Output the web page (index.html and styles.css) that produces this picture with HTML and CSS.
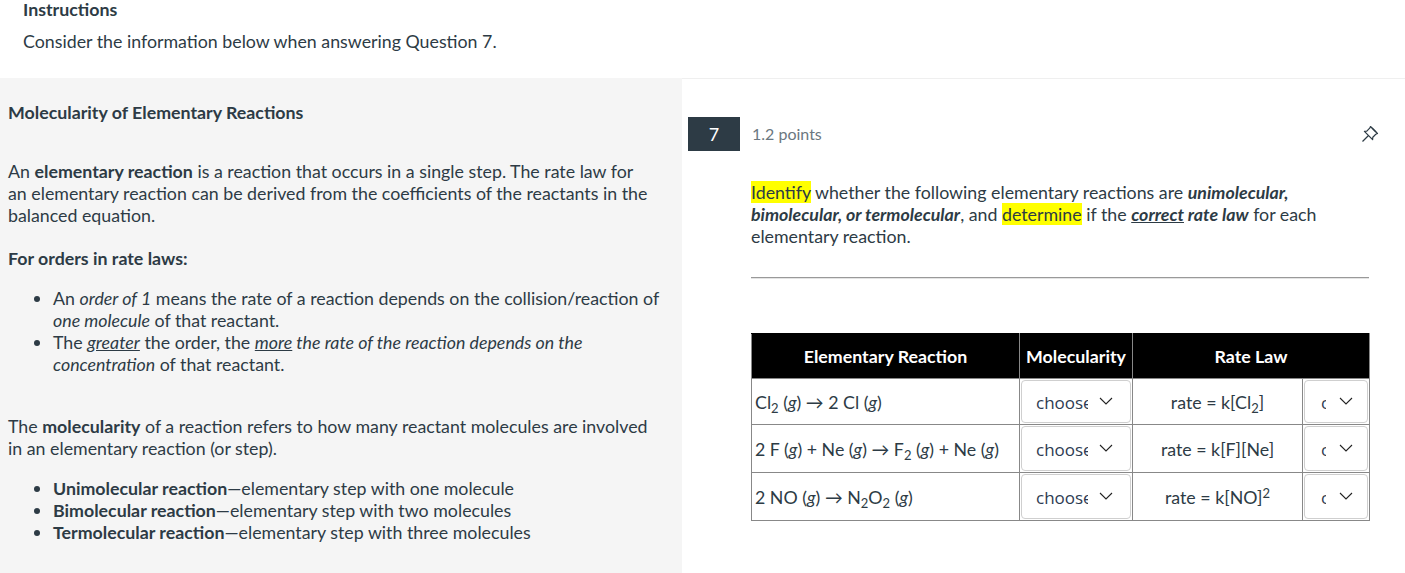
FILE: index.html
```html
<!DOCTYPE html>
<html>
<head>
<meta charset="utf-8">
<link rel="stylesheet" href="styles.css">
</head>
<body>
<div class="top">
  <div class="instr-title">Instructions</div>
  <div class="instr-text">Consider the information below when answering Question 7.</div>
</div>
<div class="main">
  <div class="left">
    <h3 class="lhead">Molecularity of Elementary Reactions</h3>
    <p class="p1">An <b>elementary reaction</b> is a reaction that occurs in a single step. The rate law for an elementary reaction can be derived from the coefficients of the reactants in the balanced equation.</p>
    <p class="p2"><b>For orders in rate laws:</b></p>
    <ul class="list">
      <li>An <i>order of 1</i> means the rate of a reaction depends on the collision/reaction of <i>one molecule</i> of that reactant.</li>
      <li>The <i><u>greater</u></i> the order, the <i><u>more</u> the rate of the reaction depends on the concentration</i> of that reactant.</li>
    </ul>
    <p class="p3">The <b>molecularity</b> of a reaction refers to how many reactant molecules are involved in an elementary reaction (or step).</p>
    <ul class="list">
      <li><b>Unimolecular reaction</b>—elementary step with one molecule</li>
      <li><b>Bimolecular reaction</b>—elementary step with two molecules</li>
      <li><b>Termolecular reaction</b>—elementary step with three molecules</li>
    </ul>
  </div>
  <div class="right">
    <div class="qhead">
      <div class="badge">7</div>
      <div class="points">1.2 points</div>
      <svg class="pin" width="20" height="20" viewBox="0 0 20 20" fill="none" stroke="#2d3b45" stroke-width="1.2" stroke-linejoin="round">
        <path d="M10.5 2.5 L17.5 9.5 L15.8 10.3 L12.8 13.2 L12.6 15.6 L4.4 7.4 L6.8 7.2 L9.7 4.2 Z"/>
        <path d="M12 4 L16 8"/>
        <path d="M8.5 11.5 L2.5 17.5"/>
      </svg>
    </div>
    <div class="qbody">
      <p class="qtext"><span class="hl">Identify</span> whether the following elementary reactions are <b><i>unimolecular, bimolecular, or termolecular</i></b>, and <span class="hl">determine</span> if the <b><i><u>correct</u> rate law</i></b> for each elementary reaction.</p>
      <hr class="rule">
      <table class="tbl">
        <thead>
          <tr>
            <th class="c1">Elementary Reaction</th>
            <th class="c2">Molecularity</th>
            <th class="c3" colspan="2">Rate Law</th>
          </tr>
        </thead>
        <tbody>
          <tr class="r1">
            <td class="rx">Cl<sub>2</sub> (<i>g</i>) → 2 Cl (<i>g</i>)</td>
            <td class="sc"><div class="sel"><span class="st wide">choose</span><svg class="chev" width="14" height="8" viewBox="0 0 14 8"><path d="M1 1 L7 7 L13 1" fill="none" stroke="#222" stroke-width="1.1"/></svg></div></td>
            <td class="rl">rate = k[Cl<sub>2</sub>]</td>
            <td class="sc"><div class="sel small"><span class="st narrow">choose</span><svg class="chev" width="14" height="8" viewBox="0 0 14 8"><path d="M1 1 L7 7 L13 1" fill="none" stroke="#222" stroke-width="1.1"/></svg></div></td>
          </tr>
          <tr class="r2">
            <td class="rx">2 F (<i>g</i>) + Ne (<i>g</i>) → F<sub>2</sub> (<i>g</i>) + Ne (<i>g</i>)</td>
            <td class="sc"><div class="sel"><span class="st wide">choose</span><svg class="chev" width="14" height="8" viewBox="0 0 14 8"><path d="M1 1 L7 7 L13 1" fill="none" stroke="#222" stroke-width="1.1"/></svg></div></td>
            <td class="rl">rate = k[F][Ne]</td>
            <td class="sc"><div class="sel small"><span class="st narrow">choose</span><svg class="chev" width="14" height="8" viewBox="0 0 14 8"><path d="M1 1 L7 7 L13 1" fill="none" stroke="#222" stroke-width="1.1"/></svg></div></td>
          </tr>
          <tr class="r3">
            <td class="rx">2 NO (<i>g</i>) →  N<sub>2</sub>O<sub>2</sub> (<i>g</i>)</td>
            <td class="sc"><div class="sel"><span class="st wide">choose</span><svg class="chev" width="14" height="8" viewBox="0 0 14 8"><path d="M1 1 L7 7 L13 1" fill="none" stroke="#222" stroke-width="1.1"/></svg></div></td>
            <td class="rl">rate = k[NO]<sup>2</sup></td>
            <td class="sc"><div class="sel small"><span class="st narrow">choose</span><svg class="chev" width="14" height="8" viewBox="0 0 14 8"><path d="M1 1 L7 7 L13 1" fill="none" stroke="#222" stroke-width="1.1"/></svg></div></td>
          </tr>
        </tbody>
      </table>
    </div>
  </div>
</div>
</body>
</html>
```
FILE: styles.css
```css
html, body {
  margin: 0;
  padding: 0;
  background: #ffffff;
  font-family: Lato, "Noto Sans", sans-serif;
  font-size: 17.8px;
  line-height: 22px;
  color: #2d3b45;
  overflow: hidden;
}

.top {
  display: flow-root;
  height: 78px;
  padding-left: 23px;
  box-sizing: border-box;
}
.instr-title {
  font-weight: bold;
  margin-top: -2px;
  height: 22px;
}
.instr-text {
  margin-top: 10px;
}

.main {
  display: flex;
  height: 495px;
}

.left {
  width: 682px;
  flex: none;
  background: #f5f5f5;
  padding: 23px 0 0 8px;
  box-sizing: border-box;
}
.lhead {
  margin: 0;
  font-size: 17.8px;
  line-height: 22px;
  font-weight: bold;
}
.p1 {
  margin: 37px 0 0 0;
  width: 642px;
}
.p2 {
  margin: 21px 0 0 0;
}
.p3 {
  margin: 40px 0 0 0;
  width: 652px;
}
.list {
  margin: 18px 0 0 0;
  padding-left: 45px;
  width: 610px;
}
.list li {
  margin: 0;
}

.right {
  flex: 1;
  border-top: 1px solid #efefef;
  padding-left: 6px;
}
.qhead {
  display: flex;
  align-items: center;
  margin-top: 38px;
  height: 34px;
  width: 692px;
}
.badge {
  width: 52px;
  height: 34px;
  background: #2d3b45;
  color: #fff;
  font-size: 18px;
  display: flex;
  align-items: center;
  justify-content: center;
}
.points {
  margin-left: 12px;
  color: #6b7780;
  font-size: 16px;
  flex: 1;
}

.qbody {
  padding-left: 63px;
  width: 618px;
}
.qtext {
  margin: 30px 0 0 0;
}
.hl {
  background: #ffff00;
}
.rule {
  margin: 30px 0 0 0;
  border: none;
  border-top: 1px solid #999;
  border-bottom: 1px solid #e4e4e4;
  height: 0;
}

.tbl {
  margin-top: 54px;
  width: 619px;
  border-collapse: collapse;
  font-size: 17.8px;
}
.tbl th {
  background: #000;
  color: #fff;
  font-weight: bold;
  height: 44px;
  padding: 0;
  border: 1px solid #888;
  border-top-color: #000;
  text-align: center;
}
.tbl td {
  border: 1px solid #888;
  padding: 0;
}
.c1 { width: 267px; }
.c2 { width: 112px; }
.rx {
  padding-left: 3px !important;
  text-align: left;
  white-space: nowrap;
}
.rl {
  text-align: center;
  width: 169px;
}
.tbl sub, .tbl sup {
  font-size: 13px;
  line-height: 0;
}
.tbl sub { vertical-align: -4px; }
.tbl sup { vertical-align: 6px; }

.sc {
  padding: 1px !important;
}
.sel {
  box-sizing: border-box;
  height: 43px;
  border: 1px solid #cfcfcf;
  border-radius: 4px;
  display: flex;
  align-items: center;
  padding-left: 14px;
  background: #fff;
}
.r1 .sel { height: 43px; }
.r2 .sel, .r3 .sel { height: 45px; }
.st {
  font-family: "Open Sans", "Noto Sans", sans-serif;
  font-size: 17px;
  color: #2d3b52;
  overflow: hidden;
  white-space: nowrap;
  display: inline-block;
  margin-top: 3px;
}
.wide { width: 52px; }
.narrow { width: 5px; margin-left: 2px; }
.chev {
  margin-left: 11px;
  margin-top: -2px;
}
.sel.small .chev { margin-left: 13px; }
```
